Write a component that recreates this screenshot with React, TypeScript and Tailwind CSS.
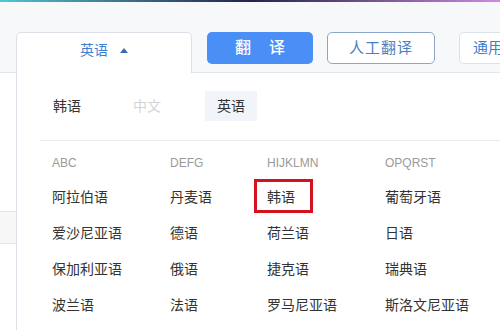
import React from 'react'

const font = { fontFamily: '"Liberation Sans", "Noto Sans CJK SC", sans-serif' }

const columns = [
  { title: 'ABC', width: 'w-[118px]', items: ['阿拉伯语', '爱沙尼亚语', '保加利亚语', '波兰语'] },
  { title: 'DEFG', width: 'w-[97px]', items: ['丹麦语', '德语', '俄语', '法语'] },
  { title: 'HIJKLMN', width: 'w-[118px]', items: ['韩语', '荷兰语', '捷克语', '罗马尼亚语'] },
  { title: 'OPQRST', width: 'w-[120px]', items: ['葡萄牙语', '日语', '瑞典语', '斯洛文尼亚语'] },
]

export default function App() {
  return (
    <div className="w-[500px] h-[330px] overflow-hidden bg-white flex flex-col" style={font}>
      {/* top accent line */}
      <div className="h-[2px] shrink-0 bg-gradient-to-r from-[#4fc6d6] via-[#23244a] to-[#d08ae0]" />

      {/* toolbar */}
      <div className="h-[71px] bg-[#f7f8fa] flex items-end shrink-0">
        <div className="w-[16px] shrink-0 h-full border-b border-[#e4e6ea]" />
        <div className="w-[176px] shrink-0 h-[41px] bg-white border border-b-0 border-[#dcdfe6] rounded-t-[5px] flex justify-center pt-[7px]">
          <div className="flex items-center gap-[12px] h-[20px] text-[14px] text-[#3f7fcf]">
            <span>英语</span>
            <span className="w-0 h-0 border-l-[4px] border-r-[4px] border-b-[5px] border-l-transparent border-r-transparent border-b-[#3a6cb5]" />
          </div>
        </div>
        <div className="flex-1 min-w-0 overflow-hidden h-full border-b border-[#e4e6ea] flex items-start pt-[30px] pl-[15px]">
          <button className="w-[106px] shrink-0 h-[32px] rounded-[5px] bg-[#4a8ff6] text-white text-[16px] font-medium flex items-center justify-center gap-[18px]">
            <span>翻</span>
            <span>译</span>
          </button>
          <button className="ml-[14px] shrink-0 w-[108px] h-[32px] rounded-[5px] bg-white border border-[#8ea6c8] text-[#4a7fc4] text-[15px] tracking-[1px] flex items-center justify-center">
            人工翻译
          </button>
          <button className="ml-[24px] shrink-0 h-[32px] rounded-l-[5px] bg-white border border-r-0 border-[#dde1e8] text-[#3f7fcf] text-[15px] pl-[13px] pr-[20px] flex items-center whitespace-nowrap">
            通用
          </button>
        </div>
      </div>

      {/* body */}
      <div className="flex flex-1">
        <div className="w-[16px] shrink-0 pt-[138px]">
          <div className="h-[33px] bg-[#f7f7f8] border-y border-[#e4e6ea]" />
        </div>

        <div className="flex-1 min-w-0 border-l border-[#dcdfe6] pl-[23px]">
          {/* recent languages */}
          <div className="flex items-center h-[30px] mt-[18px] pl-[13px] text-[14px]">
            <span className="w-[80px] text-[#333]">韩语</span>
            <span className="w-[72px] text-[#d2d4d8]">中文</span>
            <span className="h-[30px] px-[12px] flex items-center bg-[#f1f4f9] text-[#333]">英语</span>
          </div>

          <div className="mt-[19px] h-px bg-[#ebebeb]" />

          {/* language grid */}
          <div className="flex pl-[12px] pt-[14px]">
            {columns.map((col) => (
              <div key={col.title} className={`${col.width} shrink-0`}>
                <div className="h-[16px] leading-[16px] text-[12px] text-[#9a9a9a] mb-[8px]">{col.title}</div>
                {col.items.map((item) => (
                  <div key={item} className="relative h-[36px] flex items-center text-[14px] text-[#333] whitespace-nowrap">
                    {item}
                    {item === '韩语' && (
                      <div className="absolute left-[-13px] top-0 w-[59px] h-[34px] border-[3px] border-[#d3141e]" />
                    )}
                  </div>
                ))}
              </div>
            ))}
          </div>
        </div>
      </div>
    </div>
  )
}
